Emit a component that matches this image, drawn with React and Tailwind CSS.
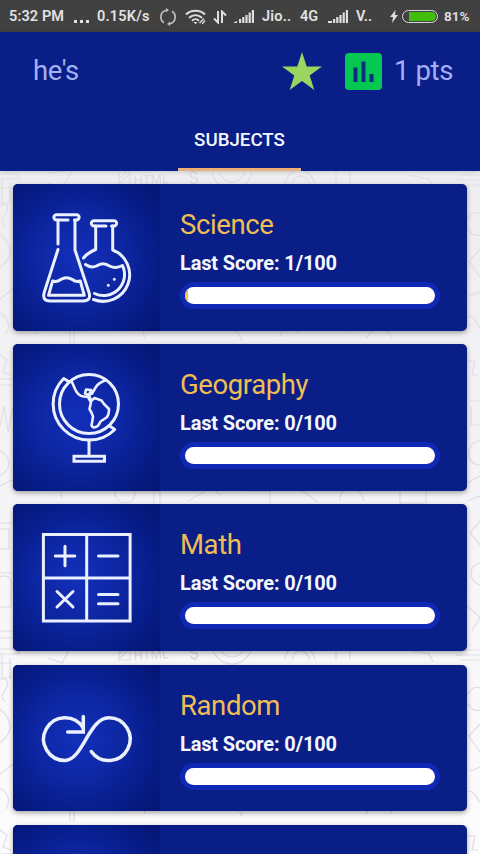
const subjects = [
  { name: "Science", score: 1, icon: FlaskIcon },
  { name: "Geography", score: 0, icon: GlobeIcon },
  { name: "Math", score: 0, icon: MathIcon },
  { name: "Random", score: 0, icon: RandomIcon },
];

function SubjectSvg({ children }) {
  return (
    <svg
      viewBox="0 0 147 147"
      className="h-[147px] w-[147px]"
      fill="none"
      stroke="#eaf0ff"
      strokeWidth="3"
      strokeLinecap="round"
      strokeLinejoin="round"
    >
      {children}
    </svg>
  );
}

function FlaskIcon() {
  return (
    <SubjectSvg>
      <path d="M55 36H43.5a2.6 2.6 0 0 1 0-5.3h20a2.6 2.6 0 0 1 0 5.3H61.5" />
      <path d="M45 36v24M45 65.500L31.200 108.500Q29 117 37 117H70Q78.500 117 76 108.500L62 66V36" />
      <path d="M39.600 97L35.500 111.300H71.300L67.300 97Q63 98.500 59.300 95.500Q53.500 92 47.700 95.500Q44 98.500 39.600 97Z" />
      <path d="M93 42H81a2.600 2.600 0 0 1 0-5.300h20a2.600 2.600 0 0 1 0 5.300H98.500" />
      <path d="M82.700 42V65.500Q75 68.500 70.500 74" />
      <path d="M99.700 42V66A26 26 0 0 1 80.500 115.500" />
      <path d="M72.500 80.500Q78 84.500 83.500 82Q90 77.500 96.500 82Q103 85 109.500 81.500A21 21 0 0 1 81.500 109.500" />
      <path d="M101.300 95.300v.01M95.300 101.300v.01" />
    </SubjectSvg>
  );
}

function GlobeIcon() {
  return (
    <SubjectSvg>
      <circle cx="76" cy="60" r="29.500" />
      <path d="M56.500 38L50.700 34.500A35.700 35.700 0 0 0 101.800 85.500L97 82.300" />
      <path d="M58.700 37.500L62 45Q65 52 70.500 52.500L75 53L77.500 57.500L81.500 54L88.500 56.500L91 60L96 65Q96 71 93.500 73.500L87.500 77.500Q85 83.500 81 83.500Q77.500 82.500 79 79L80 72.500Q79 69 76.500 65L78 58" strokeWidth="2.600" />
      <path d="M92 36.500Q84 39.500 82 44.500L79 49.500L76 51L78 46L73 45.500L72 49.500L76 51.500L77.500 55" strokeWidth="2.600" />
      <path d="M76 96v15.500M61 112.300h30.500v5H61z" strokeLinejoin="miter" />
    </SubjectSvg>
  );
}

function MathIcon() {
  return (
    <SubjectSvg>
      <path d="M30.400 30.400h86.700v86.700H30.400zM73.700 30.400v86.700M30.400 74h86.700" strokeLinejoin="miter" />
      <path d="M42.300 52h19.500M52 42.300v19.500M85.500 52h19.500M44 87.500l16 15.500M60 87.500L44 103M85.500 90.500h19.500M85.500 99.700h19.500" />
    </SubjectSvg>
  );
}

function RandomIcon() {
  return (
    <SubjectSvg>
      <path
        d="M70 62.500A21.400 21.400 0 1 0 52 95.500C69.500 95.500 76 52.700 95.700 52.700A21.400 21.400 0 1 1 78.300 86.500"
        strokeWidth="3.500"
      />
      <path d="M70.300 51.500V67H54.700" strokeWidth="3.500" strokeLinejoin="miter" />
    </SubjectSvg>
  );
}

// School themed doodles that repeat down the page.
function Doodles() {
  return (
    <svg className="absolute inset-0 h-full w-full" viewBox="0 0 480 683" fill="none">
      <defs>
        <pattern id="doodles" width="480" height="475" patternUnits="userSpaceOnUse">
          <g stroke="#dedee5" strokeWidth="1.200">
            <path d="M0 3h19v5H0M2 8v24h8V12M0 17h12M48 2l24-3-10 18-14-5M119 0h11v14h-11zM119 8l8-8M119 13l11-11" />
            <circle cx="232" cy="-2" r="20" />
            <circle cx="232" cy="-2" r="13" />
            <path d="M285 14c2-20 26-20 30 0M292 14c2-12 14-12 18 0M336 0v14M350 0v14M409 4l20 4 4 8M458 4h22M456 9h24M460 14h20" />
            <path d="M0 34c6-4 10 2 6 8s-6 10 0 14M0 63c9 8 14 18 6 28L0 97M0 128l13-10M0 142c8 5 11 13 6 21" />
            <path d="M20 158l14-8 3 14M70 148v28M74 148v28M126 152l14-4 5 20M232 150l10 20M280 166c4-14 12-16 18-4M346 160c4-8 12-8 14 0M366 168c4-12 22-14 26 0" />
            <path d="M480 42a8 8 0 0 0-11 5 7 7 0 0 0 0 12 9 9 0 0 0 11 5M480 78l-11 12 11 16M470 125l10-4M468 145c7 0 9 8 12 12M468 190h7l-3 14h6" />
            <path d="M0 184l7 5-4 12 8 3M0 208h13M0 214h13M0 255l4-20 4 26 5-24M0 280c8 4 12 12 6 20l-6 5M0 315c6-5 13-4 18-10" />
            <circle cx="125" cy="322" r="10" />
            <path d="M62 327c-4-8 8-18 12-8M154 312v20M160 312v20M188 330l24-14 8 8M246 320h24v12M300 318l18 13M340 330c0-18 20-18 24 0M400 316v16h26v-12" />
            <path d="M470 230h10M471 236v18h9M480 270c-15 0-15 24 0 24M467 312l13-7M467 330l13-5" />
            <path d="M0 352h13M0 358h9v20H0M0 402h13M0 406c10-4 13 4 11 12v18H0M480 350l-10 12 10 12M480 392c-12 2-12 18 0 22M468 436l12 10-8 14M0 460h13M0 467h13" />
          </g>
          <text x="134" y="14" fontSize="13" fill="#dadae1" className="font-[Roboto,sans-serif]" transform="rotate(-3 134 14)">HTML</text>
          <text x="190" y="14" fontSize="18" fill="#dadae1" className="font-[Roboto,sans-serif]" transform="rotate(-12 190 14)">$</text>
        </pattern>
      </defs>
      <rect width="480" height="683" fill="url(#doodles)" />
    </svg>
  );
}

function Signal({ flat = false }) {
  return (
    <svg viewBox="0 0 20 13" className="h-[13px] w-5 shrink-0" fill="#dedede">
      <path d={flat ? "M0 11h4v2H0z" : "M0 12.200l3-1.200v2H0z"} />
      <path d="M5 9h2.200v4H5zM8.200 7h2.200v6H8.200zM11.400 5h2.200v8h-2.200zM14.600 2.500h2.200V13h-2.200zM17.800 0H20v13h-2.200z" />
    </svg>
  );
}

function StatusBar() {
  return (
    <div className="flex h-8 items-center bg-[#414141] pt-px pl-[9px] text-[14.5px] font-semibold whitespace-nowrap text-[#e2e2e2]">
      <span className="w-[65px] tracking-[0.1px]">5:32 PM</span>
      <span className="flex w-[23px] gap-[3px] pt-[9px]">
        <i className="size-[3px] bg-[#e2e2e2]" />
        <i className="size-[3px] bg-[#e2e2e2]" />
        <i className="size-[3px] bg-[#e2e2e2]" />
      </span>
      <span className="w-[61px] tracking-[0.2px]">0.15K/s</span>
      <svg viewBox="0 0 20 20" className="h-5 w-5" fill="none" stroke="#bdbdbd" strokeWidth="1.700">
        <path d="M8 3.200A7 7 0 0 0 6 15.800M12 16.800A7 7 0 0 0 14 4.200" />
        <path d="M8 1l3 2-3 2.500zM12 19l-3-2 3-2.500z" fill="#bdbdbd" stroke="none" />
      </svg>
      <svg viewBox="0 0 22 16" className="ml-[7px] h-4 w-[22px]" fill="none" stroke="#dedede" strokeWidth="2">
        <path d="M1 5.500C6 .5 15 .5 20 5.500M4 8.800c4-3.500 9-3.500 13 0M7 11.800c2-2 5-2 7 0" />
        <path d="M8.500 13l2 2.300 2-2.300z" fill="#dedede" stroke="none" />
        <path d="M14.500 14l4.500-4.500M17 15l3-3.500" strokeWidth="1.300" />
      </svg>
      <svg viewBox="0 0 14 14" className="ml-[6px] h-[14px] w-[14px]" fill="none" stroke="#dedede" strokeWidth="2">
        <path d="M5 1v11.500L1 8.500M9 13V1.500l4 4" />
      </svg>
      <span className="ml-[7px] flex">
        <Signal />
      </span>
      <span className="ml-[8px] w-[38px] tracking-[0.2px]">Jio..</span>
      <span className="w-[28px]">4G</span>
      <Signal flat />
      <span className="ml-[8px] w-[34px]">V..</span>
      <svg viewBox="0 0 8 13" className="h-[13px] w-2" fill="#dedede">
        <path d="M5.500 0L0 7h3L2 13l6-8H5z" />
      </svg>
      <span className="ml-1 flex h-[13px] w-[36px] rounded-full border-[1.5px] border-[#d8d8d8] py-px pr-px pl-[6px]">
        <span className="h-full w-full rounded-r-full bg-[#43bd0b]" />
      </span>
      <span className="ml-[6px] text-[13.5px]">81%</span>
    </div>
  );
}

function Header() {
  return (
    <header className="relative z-10 flex h-[139px] flex-col justify-between bg-[#091e86] shadow-[0_1px_4px_rgba(0,0,0,0.18)]">
      <div className="flex h-[78px] items-center pr-[27px] pl-[33px] text-[27.5px] tracking-[-0.4px] text-[#a3b1f2]">
        <span>he's</span>
        <svg viewBox="0 0 40 38" className="mr-[23px] ml-auto h-[38px] w-10" fill="#9bd45f">
          <path d="M20 0l4.700 14.500H40l-12.300 9L32.300 38 20 29 7.700 38l4.600-14.500L0 14.500h15.300z" />
        </svg>
        <svg viewBox="0 0 37 37" className="mr-3 h-[37px] w-[37px]">
          <rect width="37" height="37" rx="4" fill="#05c853" />
          <path d="M8.500 14.500h4V29h-4zM16.500 8.500h4V29h-4zM24.500 21h4v8h-4z" fill="#0c2d82" />
        </svg>
        <span>1 pts</span>
      </div>
      <div className="mr-px flex h-[61px] w-[123px] items-center justify-center self-center border-b-[3px] border-[#eab07a] pt-[3px] text-[18.7px] font-medium text-[#f3f5ff]">
        SUBJECTS
      </div>
    </header>
  );
}

function Card({ icon, children }) {
  return (
    <div className="flex h-[146.6px] shrink-0 overflow-hidden rounded-[5px] bg-[#091e86] shadow-[0_2px_5px_rgba(0,0,0,0.35)]">
      <div className="w-[147px] bg-[radial-gradient(circle_at_45%_50%,#1330bb_0%,#0d26a2_40%,#061b84_75%,#041572_100%)]">
        {icon}
      </div>
      <div className="flex flex-1 flex-col pt-[25px] pr-[27px] pl-5">{children}</div>
    </div>
  );
}

function SubjectCard({ subject }) {
  const Icon = subject.icon;
  return (
    <Card icon={<Icon />}>
      <h2 className="text-[27.5px] leading-8 tracking-[-0.4px] text-[#f0bd55]">{subject.name}</h2>
      <p className="mt-[10px] text-[20px] leading-6 font-bold tracking-[-0.15px] text-[#f5f7ff]">
        Last Score: {subject.score}/100
      </p>
      <div className="mt-[7px] h-[27px] rounded-full bg-[#1029b4] p-[5px]">
        <div className="h-full overflow-hidden rounded-full bg-white">
          <div className="h-full bg-[#f5bf4f]" style={{ width: `${subject.score}%` }} />
        </div>
      </div>
    </Card>
  );
}

export default function App() {
  return (
    <div className="flex h-[854px] w-[480px] flex-col overflow-hidden font-[Roboto,sans-serif]">
      <StatusBar />
      <Header />
      <main className="relative min-h-0 flex-1 overflow-hidden bg-linear-to-b from-[#eeeef1] to-[#fcfcfd]">
        <Doodles />
        <div className="relative flex flex-col gap-[13.6px] px-[13px] pt-[13px]">
          {subjects.map((subject) => (
            <SubjectCard key={subject.name} subject={subject} />
          ))}
          <Card />
        </div>
      </main>
    </div>
  );
}
